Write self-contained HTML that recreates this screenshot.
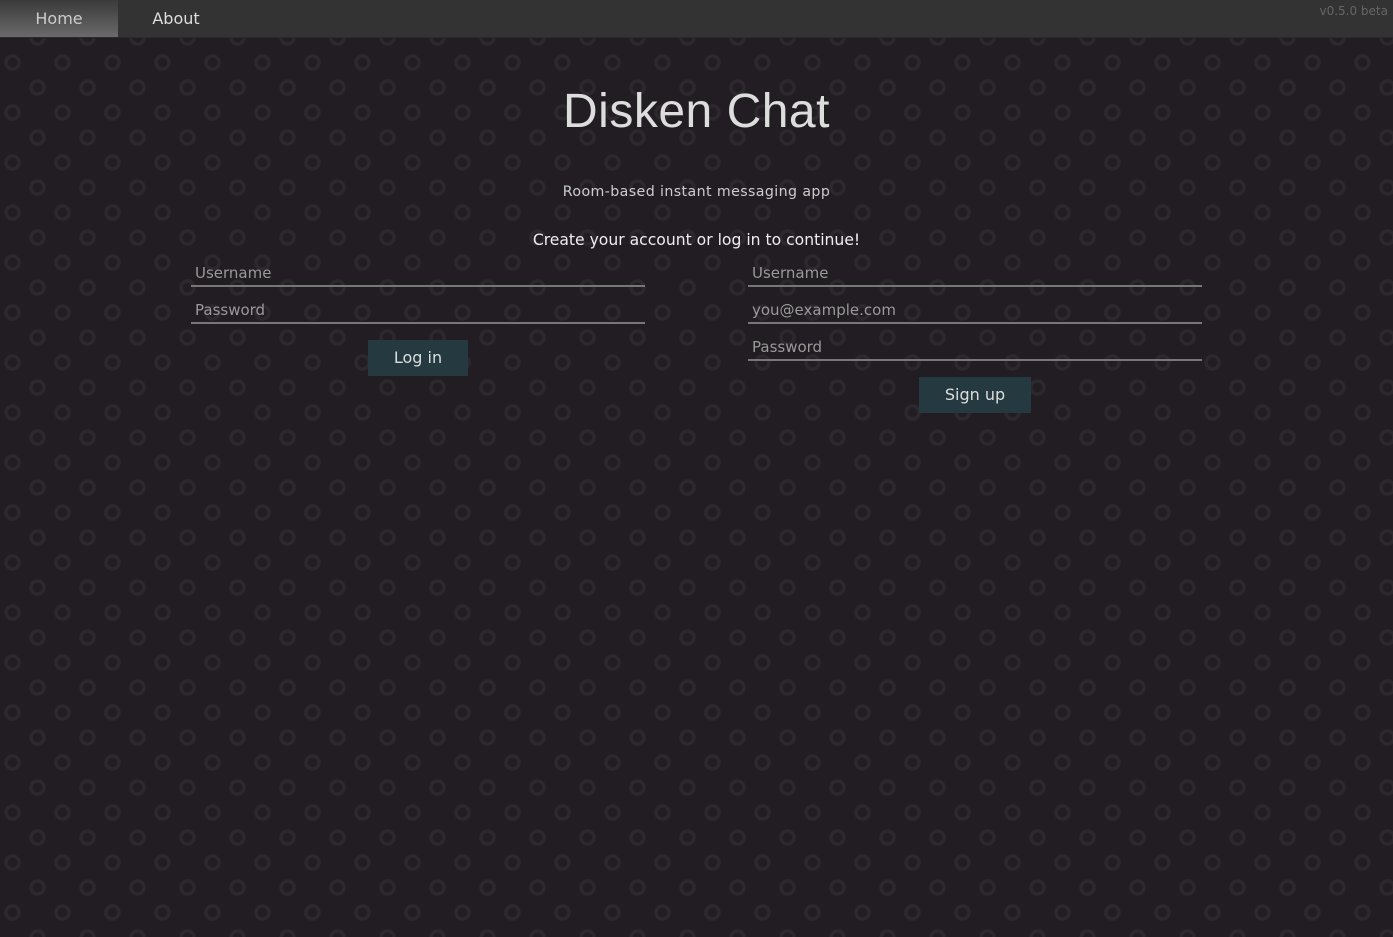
<!DOCTYPE html>
<html><head><style>
html,body{margin:0;padding:0;width:1393px;height:937px;overflow:hidden}
body{background-color:#221d23;
background-image:radial-gradient(circle at 12.5px 12.5px,transparent 4.5px,#2d272e 5px,#2d272e 8px,transparent 8.5px),radial-gradient(circle at 37.5px 37.5px,transparent 4.5px,#2d272e 5px,#2d272e 8px,transparent 8.5px);
background-size:50px 50px;background-position:0 0;
font-family:"DejaVu Sans","Liberation Sans",sans-serif;color:#ddd}
.nav{position:absolute;top:0;left:0;width:1393px;height:37px;background:#333;border-bottom:1px solid #2a2a2a}
.nav a{position:absolute;top:0;height:37px;line-height:37px;font-size:16px;color:#ddd;text-align:center}
.home{left:0;width:118px;background:linear-gradient(#3a3a3a,#6a6a6a);color:#ccc!important}
.about{left:118px;width:116px}
.ver{position:absolute;right:5px;top:4px;font-size:12px;color:#666}
h1{position:absolute;top:84px;left:0;width:1393px;text-align:center;margin:0;font-weight:300;font-size:48px;color:#ddd;font-family:"Liberation Sans",sans-serif;letter-spacing:0.5px}
.sub{position:absolute;top:184px;width:1393px;text-align:center;font-size:14.2px;color:#ccc;letter-spacing:.4px}
.cta{position:absolute;top:231px;width:1393px;text-align:center;font-size:15.6px;color:#eee}
.in{position:absolute;border-bottom:2px solid #777;font-size:15px;color:#999;padding-left:4px;line-height:22px;box-sizing:border-box;height:25px}
.btn{position:absolute;background:#253a40;color:#ddd;font-size:16px;text-align:center;line-height:36px;height:36px}
</style></head><body>
<div class="nav"><a class="home">Home</a><a class="about">About</a><span class="ver">v0.5.0 beta</span></div>
<h1>Disken Chat</h1>
<div class="sub">Room-based instant messaging app</div>
<div class="cta">Create your account or log in to continue!</div>
<div class="in" style="left:191px;top:262px;width:454px">Username</div>
<div class="in" style="left:191px;top:299px;width:454px">Password</div>
<div class="btn" style="left:368px;top:340px;width:100px">Log in</div>
<div class="in" style="left:748px;top:262px;width:454px">Username</div>
<div class="in" style="left:748px;top:299px;width:454px">you@example.com</div>
<div class="in" style="left:748px;top:336px;width:454px">Password</div>
<div class="btn" style="left:919px;top:377px;width:112px">Sign up</div>
</body></html>
